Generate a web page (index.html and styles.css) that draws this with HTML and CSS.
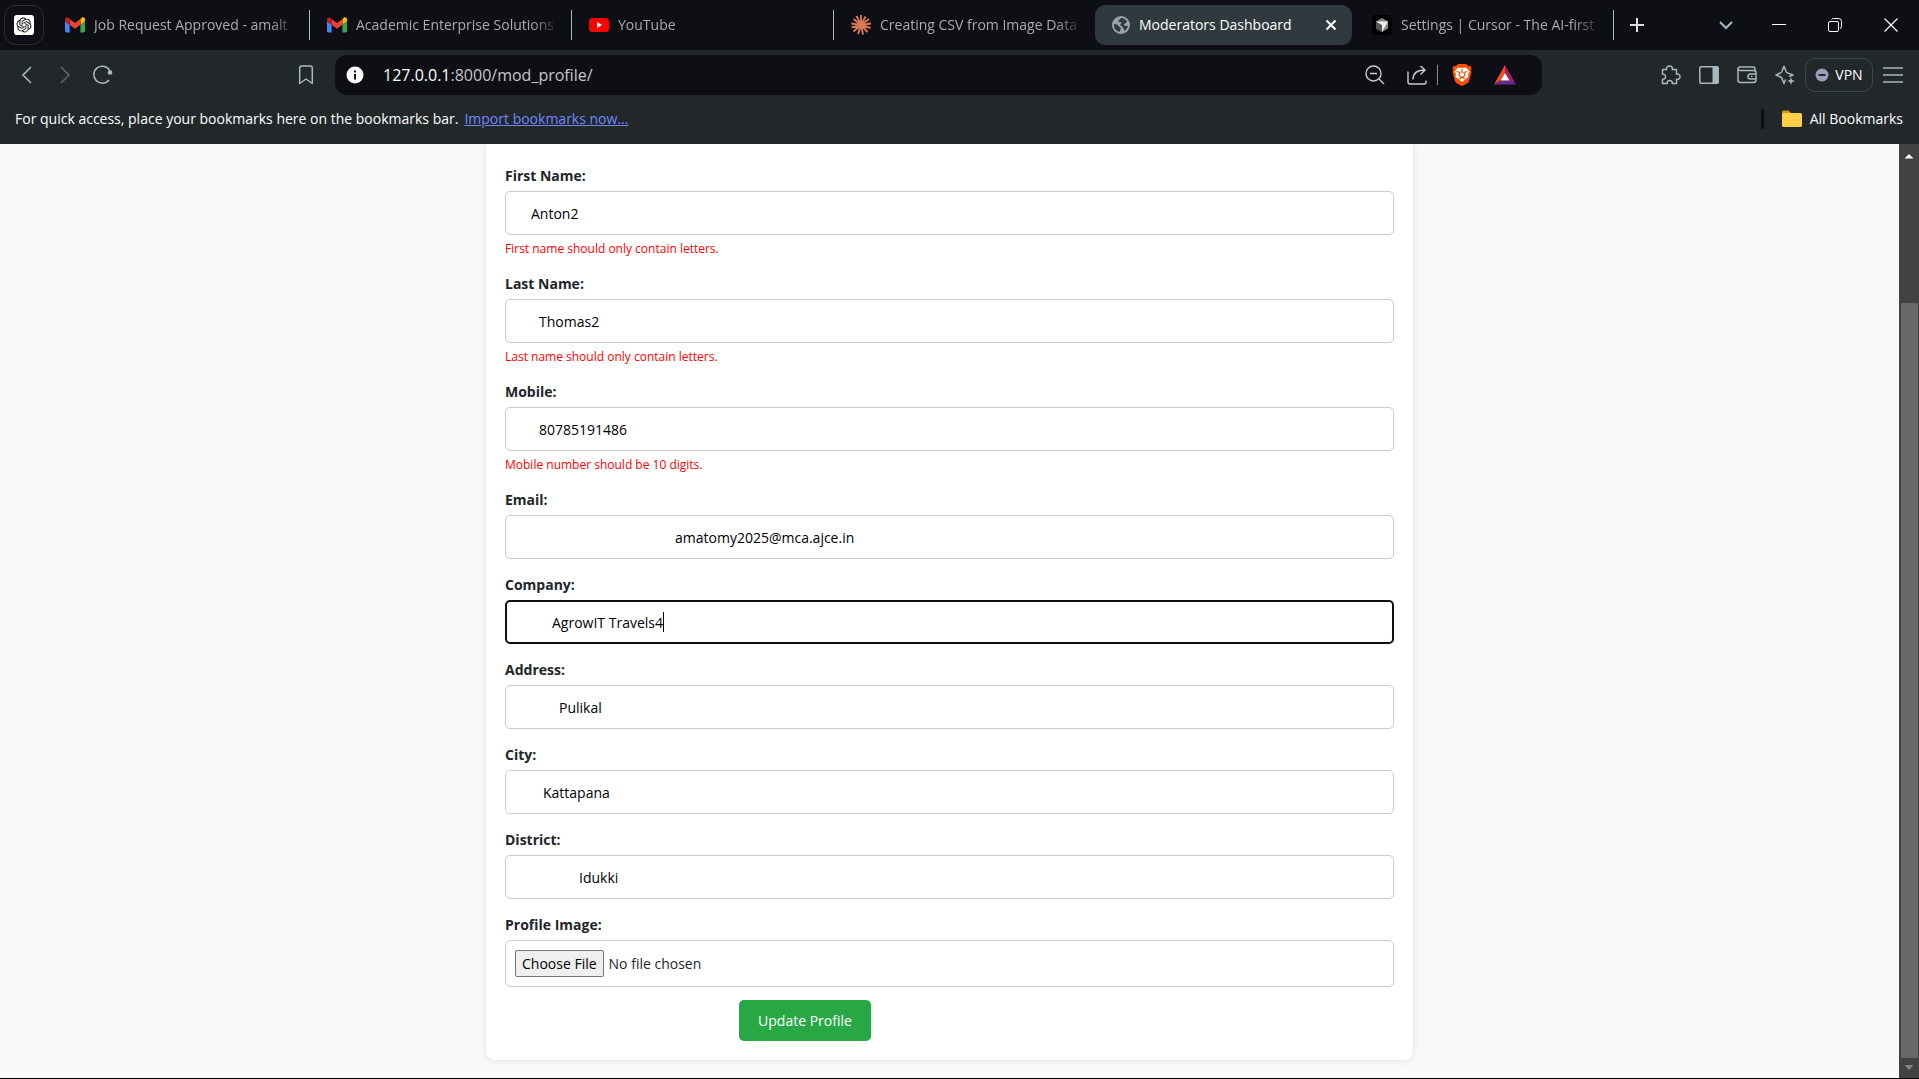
FILE: index.html
```html
<!DOCTYPE html>
<html lang="en">
<head>
<meta charset="utf-8">
<title>Moderators Dashboard</title>
<link rel="stylesheet" href="styles.css">
</head>
<body>
<svg class="defs" aria-hidden="true">
  <symbol id="gmail" viewBox="0 0 20 16">
    <path fill="#4285f4" d="M1.4 15.5h3.2V7.7L0 4.3v9.8c0 .8.6 1.4 1.4 1.4z"/>
    <path fill="#34a853" d="M15.4 15.5h3.2c.8 0 1.4-.6 1.4-1.4V4.3l-4.6 3.4z"/>
    <path fill="#fbbc04" d="M15.4 2v5.7L20 4.3V2.4c0-1.7-2-2.7-3.3-1.6z"/>
    <path fill="#ea4335" d="M4.6 7.7V2L10 6l5.4-4v5.7L10 11.8z"/>
    <path fill="#c5221f" d="M0 2.4v1.9l4.6 3.4V2L3.3.8C2-.2 0 .7 0 2.4z"/>
  </symbol>
</svg>
<div class="browser">
  <header>
    <nav class="tabs" aria-label="Tabs">
      <button class="pinned" aria-label="ChatGPT">
        <svg width="20" height="20" viewBox="0 0 32 32"><rect width="32" height="32" rx="5" fill="#fff"/><path fill="#111" transform="translate(4 4)" d="M22.2819 9.8211a5.9847 5.9847 0 0 0-.5157-4.9108 6.0462 6.0462 0 0 0-6.5098-2.9A6.0651 6.0651 0 0 0 4.9807 4.1818a5.9847 5.9847 0 0 0-3.9977 2.9 6.0462 6.0462 0 0 0 .7427 7.0966 5.98 5.98 0 0 0 .511 4.9107 6.051 6.051 0 0 0 6.5146 2.9001A5.9847 5.9847 0 0 0 13.2599 24a6.0557 6.0557 0 0 0 5.7718-4.2058 5.9894 5.9894 0 0 0 3.9977-2.9001 6.0557 6.0557 0 0 0-.7475-7.0729zm-9.022 12.6081a4.4755 4.4755 0 0 1-2.8764-1.0408l.1419-.0804 4.7783-2.7582a.7948.7948 0 0 0 .3927-.6813v-6.7369l2.02 1.1686a.071.071 0 0 1 .038.052v5.5826a4.504 4.504 0 0 1-4.4945 4.4944zm-9.6607-4.1254a4.4708 4.4708 0 0 1-.5346-3.0137l.142.0852 4.783 2.7582a.7712.7712 0 0 0 .7806 0l5.8428-3.3685v2.3324a.0804.0804 0 0 1-.0332.0615L9.74 19.9502a4.4992 4.4992 0 0 1-6.1408-1.6464zM2.3408 7.8956a4.485 4.485 0 0 1 2.3655-1.9728V11.6a.7664.7664 0 0 0 .3879.6765l5.8144 3.3543-2.0201 1.1685a.0757.0757 0 0 1-.071 0l-4.8303-2.7865A4.504 4.504 0 0 1 2.3408 7.872zm16.5963 3.8558L13.1038 8.364 15.1192 7.2a.0757.0757 0 0 1 .071 0l4.8303 2.7913a4.4944 4.4944 0 0 1-.6765 8.1042v-5.6772a.79.79 0 0 0-.407-.667zm2.0107-3.0231l-.142-.0852-4.7735-2.7818a.7759.7759 0 0 0-.7854 0L9.409 9.2297V6.8974a.0662.0662 0 0 1 .0284-.0615l4.8303-2.7866a4.4992 4.4992 0 0 1 6.6802 4.66zM8.3065 12.863l-2.02-1.1638a.0804.0804 0 0 1-.038-.0567V6.0742a4.4992 4.4992 0 0 1 7.3757-3.4537l-.142.0805L8.704 5.459a.7948.7948 0 0 0-.3927.6813zm1.0976-2.3654l2.602-1.4998 2.6069 1.4998v2.9994l-2.5974 1.4997-2.6067-1.4997Z"/></svg>
      </button>
      <a class="tab" href="#"><svg width="20" height="16"><use href="#gmail"/></svg><span class="title">Job Request Approved - amalt</span></a>
      <a class="tab" href="#"><svg width="20" height="16"><use href="#gmail"/></svg><span class="title">Academic Enterprise Solutions</span></a>
      <a class="tab" href="#"><svg width="20" height="20" viewBox="0 0 20 20"><rect y="3" width="20" height="14" rx="3.5" fill="#f00"/><path fill="#fff" d="M8 7v6l5-3z"/></svg><span class="title">YouTube</span></a>
      <a class="tab bare" href="#"><svg width="20" height="20" viewBox="0 0 20 20" stroke="#d97757" stroke-width="1.9"><path d="M10 10V0M10 10l4.500-8.500M10 10l8-6M10 10l10-1.500M10 10l9.500 3M10 10l6.500 7M10 10l2 9.500M10 10l-3 9M10 10l-7.500 6.500M10 10 .5 12.500M10 10 .3 8.500M10 10 2.500 4M10 10 5.500 1"/></svg><span class="title">Creating CSV from Image Data</span></a>
      <a class="tab active" href="#" aria-current="page"><svg width="18" height="18" viewBox="0 0 18 18"><circle cx="9" cy="9" r="9" fill="#9aa0a6"/><path fill="#30393d" d="M2 8c2 .2 4 .2 4.500 2 .3 1 1.500 1 2 1.800.7 1.200-.7 2-.5 3.900C4.500 15.400 1.700 12.500 2 8zM9 2c2.600 0 5 1.500 6.100 3.800-1.100.7-1.600 2-2.600 2.200-1.300.2-.8 1.800.5 1.900 1.200.1 1.700-.4 2.900.2-.4 2-1.700 3.900-3.600 4.900.2-2-1-2.200-1.400-3.500-.4-1.200-1.700-1.200-2.300-2C7.600 8.300 9.300 7.500 9.700 6.500 8.500 6 6.500 6.200 6.300 5 6.200 4 8.500 3.500 9 2z"/></svg><span class="title">Moderators Dashboard</span><svg class="close" width="12" height="12" stroke="#fff" stroke-width="2"><path d="m1.500 1.500 9 9m0-9-9 9"/></svg></a>
      <a class="tab" href="#"><svg width="20" height="20" viewBox="0 0 20 20"><rect width="20" height="20" rx="4"/><path fill="#888" d="m10 3 6 3.500v7L10 17l-6-3.500v-7z"/><path fill="#555" d="M4 6.500V13.500l6 3.500v-7z"/><path fill="#eee" d="M4 6.500h12L10 17v-7z"/></svg><span class="title">Settings | Cursor - The AI-first</span></a>
      <button class="new-tab" aria-label="New tab"><svg width="14" height="14" stroke="#ddd" stroke-width="2"><path d="M7 0v14M0 7h14"/></svg></button>
      <div class="window">
        <button class="search-tabs" aria-label="Search tabs"><svg width="14" height="14" fill="none" stroke="#a8b8bf" stroke-width="2"><path d="m1 4 6 6 6-6"/></svg></button>
        <button aria-label="Minimize"><svg width="14" height="14" stroke="#fff"><path d="M0 6.500h14"/></svg></button>
        <button aria-label="Restore"><svg width="14" height="14" fill="none" stroke="#fff"><rect x=".5" y="3.500" width="10" height="10" rx="1.500"/><path d="M3.500 1.500q.5-1 2-1h5q3 0 3 3v5q0 1.500-1.500 2"/></svg></button>
        <button aria-label="Close"><svg width="14" height="14" stroke="#fff" stroke-width="1.200"><path d="m.5.5 13 13m0-13-13 13"/></svg></button>
      </div>
    </nav>
    <div class="toolbar">
      <div class="history">
        <button aria-label="Back"><svg width="20" height="20" fill="none" stroke="#a8b8bf" stroke-width="1.600"><path d="m14 2-8 8 8 8"/></svg></button>
        <button aria-label="Forward"><svg width="20" height="20" fill="none" stroke="#5c666b" stroke-width="1.600"><path d="m6 2 8 8-8 8"/></svg></button>
        <button aria-label="Reload"><svg width="20" height="20" fill="none" stroke="#a8b8bf" stroke-width="1.600"><path d="M16 15A8.500 8.500 0 1 1 17 6"/><circle cx="17" cy="7.500" r="2.300" fill="#a8b8bf" stroke="none"/></svg></button>
      </div>
      <button class="save" aria-label="Bookmark"><svg width="20" height="20" fill="none" stroke="#a8b8bf" stroke-width="1.500"><path d="M3.700 18.500V3q0-2 2-2h8.600q2 0 2 2v15.500L10 14z" stroke-linejoin="round"/></svg></button>
      <div class="omnibox">
        <svg width="18" height="18"><circle cx="9" cy="9" r="8.500" fill="#fff"/><path stroke="#0e0f14" stroke-width="2" d="M9 8v5.500M9 4.500v2"/></svg>
        <span class="url">127.0.0.1<span>:8000/mod_profile/</span></span>
        <button aria-label="Zoom out"><svg width="20" height="20" fill="none" stroke="#ccc" stroke-width="1.400"><circle cx="8.500" cy="8.500" r="7.500"/><path d="m14 14 5 5M5 8.500h7"/></svg></button>
        <button aria-label="Share"><svg width="20" height="20" fill="none" stroke="#ccc" stroke-width="1.400"><path d="M1 6.500V17q0 2 2 2h14q2 0 2-2v-1.500M6 14.500c0-6 3-9.500 12-9.500M13.500 1l4.500 4-4.500 4.500"/></svg></button>
        <i class="bar"></i>
        <button aria-label="Brave Shields"><svg width="20" height="22" viewBox="0 0 20 22"><path fill="#ff5000" d="m6 0-2 2-2-.3L.4 4l.8 2L.5 8 3 17q.5 1.500 2 2.500l5 2.500 5-2.500q1.500-1 2-2.500l2.500-9-.7-2 .8-2L18 1.700l-2 .3-2-2z"/><path fill="#fff" d="M10 4 6 3.600 2.500 7.500 4 10.500l-.5 2.300 4 3.200 2.500 2 2.500-2 4-3.200-.5-2.300 1.500-3L14 3.600z"/><path fill="none" stroke="#ff5000" stroke-width="1.200" d="M4.500 7.500 8 8.500l-1 3 2 1.500h2l2-1.500-1-3 3.500-1M7 15l3-1.500 3 1.500M10 5v4"/></svg></button>
        <button aria-label="Brave Rewards"><svg width="22" height="20" viewBox="0 0 22 20"><path fill="#ff4724" d="M11 0 0 19.500 6.500 15.500 11 8z"/><path fill="#9e1f63" d="m11 0 11 19.500-6.500-4L11 8z"/><path fill="#662d91" d="M0 19.500h22l-6.500-4h-9z"/><path fill="#fff" d="m11 8 4.500 7.500h-9z"/></svg></button>
      </div>
      <div class="actions">
        <button aria-label="Extensions"><svg width="20" height="20" fill="none" stroke="#a8b8bf" stroke-width="1.500"><path d="M1.500 4.500h4.200C5 2.500 6.500 1 8.500 1s3.500 1.500 2.800 3.500h4.200v4.700c2-.7 3.500.6 3.500 2.500s-1.500 3.200-3.500 2.500v4.300h-4.400c.5-2-.6-3-2.300-3s-3 1-2.500 3H1.500v-4.200c2 .2 3-.9 3-2.600s-1-2.700-3-2.500z" stroke-linejoin="round"/></svg></button>
        <button aria-label="Sidebar"><svg width="20" height="20"><rect x=".8" y="1.800" width="18.400" height="16.400" rx="1" fill="none" stroke="#a8b8bf" stroke-width="1.500"/><path fill="#a8b8bf" d="M13.500 1.500H19v17h-5.500z"/></svg></button>
        <button aria-label="Wallet"><svg width="20" height="20" fill="none" stroke="#a8b8bf" stroke-width="1.500"><path d="M18 5.500V4q0-2-2-2H3Q1 2 1 4v11q0 2.500 2.500 2.500h13q2.500 0 2.500-2.500V8q0-2.500-2.500-2.500h-13Q1 5.500 1 3.500M19 9h-5.500q-2.500 0-2.500 2.500t2.500 2.500H19M14 11.500h1.500"/></svg></button>
        <button aria-label="Leo AI"><svg width="20" height="20" fill="none" stroke="#a8b8bf" stroke-width="1.500" stroke-linejoin="round"><path d="m9 1 2 5.500q.4 1 1.400 1.400L18 10l-4 1.500M9 1 7 6.500q-.4 1-1.400 1.400L1 10l4.600 2q1 .4 1.400 1.400L9 18.500l1.500-4"/><path fill="#a8b8bf" stroke="none" d="m16 12 1 3 3 1-3 1-1 3-1-3-3-1 3-1z"/></svg></button>
      </div>
      <button class="vpn"><svg width="14" height="14"><circle cx="7" cy="7" r="6.500" fill="#9d9db8"/><path stroke="#22272a" stroke-width="2" d="M3.500 7h7"/></svg>VPN</button>
      <button class="menu" aria-label="Menu"><svg width="20" height="16" stroke="#a8b8bf" stroke-width="1.600"><path d="M0 1h20M0 8h20M0 15h20"/></svg></button>
    </div>
    <div class="bookmarks">
      <span>For quick access, place your bookmarks here on the bookmarks bar.</span>
      <a href="#">Import bookmarks now...</a>
      <i class="bar"></i>
      <button class="folder"><svg width="20" height="18" viewBox="0 0 20 18"><path fill="#d99a0b" d="M0 2q0-1.500 1.500-1.500h5L9 3h9v5H0z"/><path fill="#fdcf46" d="M0 4.500Q0 3 1.500 3h17Q20 3 20 4.500v11q0 1.500-1.500 1.500h-17Q0 17 0 15.500z"/></svg>All Bookmarks</button>
    </div>
  </header>
  <div class="viewport">
    <main class="page">
      <form class="card">
        <div class="field">
          <label for="first">First Name:</label>
          <input class="in-16" id="first" type="text" value="Anton2">
          <p class="error">First name should only contain letters.</p>
        </div>
        <div class="field">
          <label for="last">Last Name:</label>
          <input class="in-24" id="last" type="text" value="Thomas2">
          <p class="error">Last name should only contain letters.</p>
        </div>
        <div class="field">
          <label for="mobile">Mobile:</label>
          <input class="in-24" id="mobile" type="text" value="80785191486">
          <p class="error">Mobile number should be 10 digits.</p>
        </div>
        <div class="field">
          <label for="email">Email:</label>
          <input class="in-160" id="email" type="text" value="amatomy2025@mca.ajce.in">
        </div>
        <div class="field">
          <label for="company">Company:</label>
          <div class="editing">
            <input class="in-36 focused" id="company" type="text" value="AgrowIT Travels4">
            <i class="caret"></i>
          </div>
        </div>
        <div class="field">
          <label for="address">Address:</label>
          <input class="in-44" id="address" type="text" value="Pulikal">
        </div>
        <div class="field">
          <label for="city">City:</label>
          <input class="in-28" id="city" type="text" value="Kattapana">
        </div>
        <div class="field">
          <label for="district">District:</label>
          <input class="in-64" id="district" type="text" value="Idukki">
        </div>
        <div class="field">
          <label for="image">Profile Image:</label>
          <input id="image" type="file">
        </div>
        <button class="submit" type="submit">Update Profile</button>
      </form>
    </main>
    <div class="scrollbar" aria-hidden="true">
      <svg width="20" height="20"><path fill="#fff" d="M5.500 14.500h9L10 10z"/></svg>
      <div class="thumb"></div>
      <svg width="20" height="20"><path fill="#868686" d="M5.500 7h9L10 12z"/></svg>
    </div>
  </div>
</div>
</body>
</html>
```

FILE: styles.css
```css
* { box-sizing: border-box; }

body {
  margin: 0;
  font-family: "Segoe UI", "Open Sans", "Noto Sans", sans-serif;
  font-size: 14px;
  line-height: 20px;
  color: #212529;
}

button {
  display: flex;
  align-items: center;
  justify-content: center;
  padding: 0;
  border: 0;
  background: none;
  color: inherit;
  font: inherit;
}

svg { flex: none; }
.defs { display: none; }

.browser {
  display: flex;
  flex-direction: column;
  height: 100vh;
  border-bottom: 1px solid #000;
}

header { background: #22272a; color: #fff; }

/* Tab strip */
.tabs {
  display: flex;
  align-items: center;
  height: 50px;
  padding-left: 4px;
  background: #0e0f14;
}

.pinned {
  width: 40px;
  height: 40px;
  margin-right: 4px;
  border: 1px solid #2b3034;
  border-radius: 12px;
}

.tab {
  position: relative;
  display: flex;
  flex: 0 1 262px;
  align-items: center;
  gap: 9px;
  min-width: 0;
  height: 40px;
  padding: 0 12px 0 17px;
  color: #a9abae;
  text-decoration: none;
}

.tab::after {
  content: "";
  position: absolute;
  top: 5px;
  right: 0;
  width: 1px;
  height: 30px;
  background: #a8b8bf;
}

.tab.active::after, .tab.bare::after { display: none; }
.tab.bare { flex-basis: 261px; }
.tab.active { flex-basis: 257px; padding-right: 15px; border-radius: 10px; background: #30393d; color: #fff; }
.tab.active + .tab { padding-left: 20px; }

.title {
  flex: 1;
  overflow: hidden;
  white-space: nowrap;
  mask-image: linear-gradient(to right, #000 calc(100% - 28px), transparent);
}

.tab.active .title { mask-image: none; }
.new-tab { width: 46px; height: 40px; }

.window { display: flex; margin-left: auto; }
.window button { width: 56px; height: 50px; }
.window .search-tabs { width: 50px; }

/* Toolbar */
.toolbar { display: flex; align-items: center; height: 50px; padding-right: 16px; }
.history { display: flex; gap: 18px; padding-left: 17px; }
.save { margin-left: 183px; }

.omnibox {
  display: flex;
  flex: 0 1 1207px;
  align-items: center;
  height: 40px;
  margin-left: 19px;
  padding: 0 26px 0 11px;
  border-radius: 12px;
  background: #0e0f14;
}

.url { flex: 1; padding-left: 19px; font-size: 16px; }
.url span { color: #c5c7c9; }
.omnibox button { margin-left: 22px; }
.omnibox .bar { width: 1px; height: 20px; margin: 0 -8px 0 10px; background: #85888c; }

.actions { display: flex; gap: 18px; margin-left: auto; }

.vpn {
  gap: 6px;
  width: 68px;
  height: 34px;
  margin: 0 10px;
  border: 1px solid #3b474c;
  border-radius: 10px;
}

/* Bookmarks bar */
.bookmarks { display: flex; align-items: center; height: 44px; padding: 0 16px 6px 15px; }
.bookmarks a { margin-left: 6px; color: #7187ff; }
.bookmarks .bar { width: 3px; height: 20px; margin-left: auto; background: #0e0f14; border-radius: 1px; }
.folder { gap: 8px; margin-left: 18px; }

/* Page */
.viewport { display: flex; flex: 1; min-height: 0; overflow: hidden; background: #f8f9fa; }
.page { flex: 1; }

.card {
  width: 100%;
  max-width: 927px;
  margin: 0 auto;
  padding: 21px 19px 19px;
  border-radius: 0 0 9px 9px;
  background: #fff;
  box-shadow: 0 0 9px rgb(0 0 0 / 10%);
}

.field { display: flex; flex-direction: column; margin-bottom: 15px; }
.field label { margin-bottom: 4px; font-weight: 700; line-height: 22px; }

.field input {
  width: 100%;
  height: 44px;
  padding: 0 9px;
  border: 1px solid #ccc;
  border-radius: 5px;
  background: #fff;
  color: #000;
  font: inherit;
}

.field .focused { border: 2px solid #101010; outline: 0; }
.field input[type="file"] { height: 47px; padding: 9px; color: #212529; }

input::file-selector-button {
  height: 27px;
  margin-right: 5px;
  padding: 0 6px;
  border: 1px solid #767676;
  border-radius: 2px;
  background: #efefef;
  color: #000;
  font: inherit;
}

.in-16 { text-indent: 16px; }
.in-24 { text-indent: 24px; }
.in-28 { text-indent: 28px; }
.in-36 { text-indent: 36px; }
.in-44 { text-indent: 44px; }
.in-64 { text-indent: 64px; }
.in-160 { text-indent: 160px; }

.editing { position: relative; }
.caret { position: absolute; top: 12px; left: 158px; width: 1px; height: 20px; background: #000; }

.error { margin: 5px 0 0; color: #f00; font-size: 12px; line-height: 18px; }

.submit {
  width: 132px;
  height: 41px;
  margin: -2px 0 0 234px;
  border-radius: 5px;
  background: #28a745;
  color: #fff;
}

/* Scrollbar */
.scrollbar { display: flex; flex-direction: column; width: 20px; background: #424242; }
.thumb { flex: 1; margin: 139px 1px 0 2px; background: #686868; }
```
